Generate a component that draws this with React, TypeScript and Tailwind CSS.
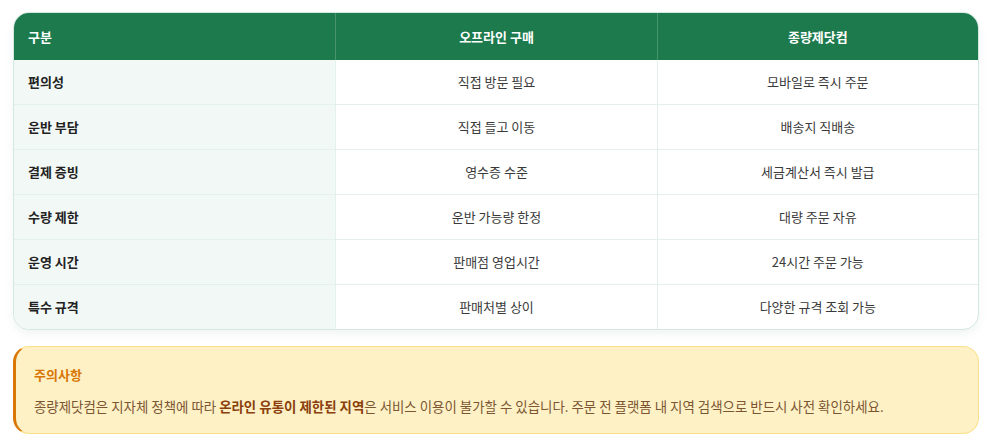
const rows = [
  ['편의성', '직접 방문 필요', '모바일로 즉시 주문'],
  ['운반 부담', '직접 들고 이동', '배송지 직배송'],
  ['결제 증빙', '영수증 수준', '세금계산서 즉시 발급'],
  ['수량 제한', '운반 가능량 한정', '대량 주문 자유'],
  ['운영 시간', '판매점 영업시간', '24시간 주문 가능'],
  ['특수 규격', '판매처별 상이', '다양한 규격 조회 가능'],
];

export default function App() {
  return (
    <div className="min-h-screen bg-white pl-[13px] pr-[7px] pt-3 font-['Noto_Sans_CJK_KR','Noto_Sans',sans-serif]">
      {/* Comparison table */}
      <div className="overflow-hidden rounded-2xl border border-[#d4e8e1] bg-white shadow-[0_4px_10px_rgba(15,60,45,0.06)]">
        <div className="grid h-[47px] grid-cols-3 bg-[#1c7a4d] text-[13px] font-bold text-white">
          <div className="flex items-center px-3.5">구분</div>
          <div className="flex items-center justify-center border-l border-white/20">오프라인 구매</div>
          <div className="flex items-center justify-center border-l border-white/20">종량제닷컴</div>
        </div>
        {rows.map((row, i) => (
          <div
            key={row[0]}
            className={`grid grid-cols-3 text-[13px] ${i > 0 ? 'h-[45px] border-t border-[#e3f0ec]' : 'h-[44px]'}`}
          >
            <div className="flex items-center bg-[#f2f8f6] px-3.5 font-bold text-[#222]">{row[0]}</div>
            <div className="flex items-center justify-center border-l border-[#e3f0ec] text-[#3a3a3a]">{row[1]}</div>
            <div className="flex items-center justify-center border-l border-[#e3f0ec] text-[#3a3a3a]">{row[2]}</div>
          </div>
        ))}
      </div>

      {/* Notice */}
      <div className="mt-4 rounded-2xl border border-l-[3px] border-[#fbe08a] border-l-[#d97706] bg-[#fef1c6] px-[18px] pt-[18px] pb-4">
        <div className="text-[13px] font-bold leading-5 text-[#d97706]">주의사항</div>
        <p className="mt-[10px] text-[13.44px] leading-[22px] text-[#7c5632]">
          종량제닷컴은 지자체 정책에 따라 <strong className="font-bold text-[#8a3f0c]">온라인 유통이 제한된 지역</strong>은 서비스 이용이 불가할 수 있습니다. 주문 전 플랫폼 내 지역 검색으로 반드시 사전 확인하세요.
        </p>
      </div>
    </div>
  );
}
